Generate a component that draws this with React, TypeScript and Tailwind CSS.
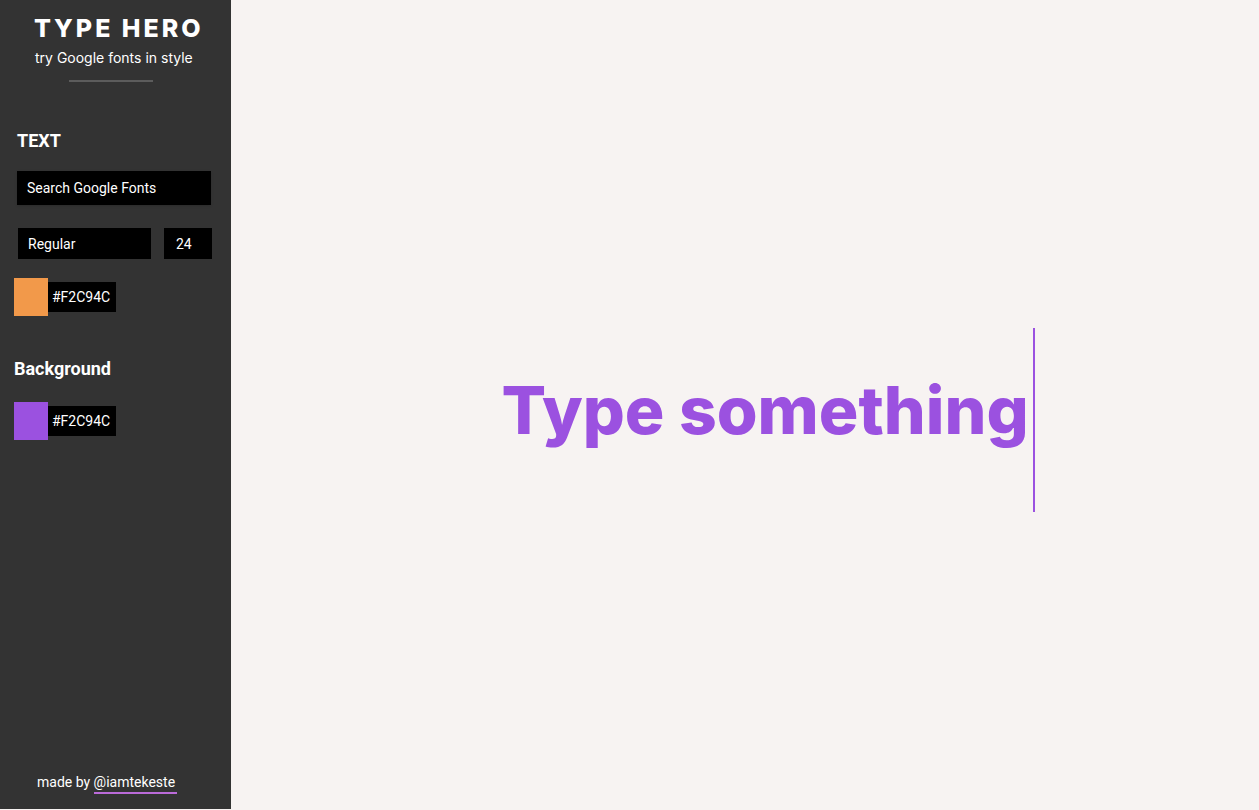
import { useState } from "react";

type ColorFieldProps = {
  label: string;
  code: string;
  initialColor: string;
};

function ColorField({ label, code, initialColor }: ColorFieldProps) {
  const [color, setColor] = useState(initialColor);
  return (
    <div className="flex items-center">
      <input
        type="color"
        aria-label={`${label} swatch`}
        value={color}
        onChange={(e) => setColor(e.target.value)}
        className="h-[38px] w-[34px] cursor-pointer appearance-none border-0 bg-transparent p-0 [&::-webkit-color-swatch-wrapper]:p-0 [&::-webkit-color-swatch]:rounded-none [&::-webkit-color-swatch]:border-0"
      />
      <input
        type="text"
        aria-label={`${label} code`}
        defaultValue={code}
        className="h-[30px] w-[68px] bg-black pl-1 text-sm text-white outline-none"
      />
    </div>
  );
}

export default function App() {
  return (
    <div className="flex min-h-screen bg-[#f7f3f2] font-['Roboto',sans-serif]">
      <aside className="mb-px flex w-[231px] shrink-0 flex-col bg-[#333333] text-white">
        <header className="px-[34px] pt-3 font-['Inter',sans-serif]">
          <h1 className="text-[25px] leading-8 font-extrabold tracking-[3px] whitespace-nowrap">TYPE HERO</h1>
          <p className="mt-1 pl-px text-sm leading-5 whitespace-nowrap">try Google fonts in style</p>
          <hr className="mt-3 ml-[35px] w-[84px] border-t-2 border-[#5c5c5c]" />
        </header>

        <section className="mt-[47px] px-[14px]">
          <h2 className="pl-[3px] text-lg leading-6 font-bold">TEXT</h2>
          <div className="mt-[18px] px-[3px]">
            <input
              type="text"
              aria-label="Search Google Fonts"
              placeholder="Search Google Fonts"
              className="h-[34px] w-[194px] bg-black px-[10px] text-sm text-white shadow-sm outline-none placeholder:text-white placeholder:opacity-100"
            />
          </div>
          <div className="mt-[23px] flex gap-[13px] pl-1">
            <select
              aria-label="Font style"
              className="h-[31px] w-[133px] appearance-none rounded-none bg-black px-[10px] text-sm text-white outline-none"
            >
              <option>Regular</option>
              <option>Bold</option>
            </select>
            <input
              type="text"
              aria-label="Font size"
              defaultValue="24"
              className="h-[31px] w-12 bg-black px-3 text-sm text-white outline-none"
            />
          </div>
          <div className="mt-[19px]">
            <ColorField label="Text color" code="#F2C94C" initialColor="#f2994a" />
          </div>
        </section>

        <section className="mt-[41px] px-[14px]">
          <h2 className="text-lg leading-6 font-bold">Background</h2>
          <div className="mt-[21px]">
            <ColorField label="Background color" code="#F2C94C" initialColor="#9b51e0" />
          </div>
        </section>

        <footer className="mt-auto pb-[15px] pl-[37px] text-sm leading-5">
          made by{" "}
          <a href="#iamtekeste" className="inline-block border-b-2 border-[#bb6bd9] pr-[2px]">
            @iamtekeste
          </a>
        </footer>
      </aside>

      <main className="flex flex-1 items-center justify-center pt-[30px] pl-[46px]">
        <input
          type="text"
          aria-label="Preview text"
          defaultValue="Type something"
          className="field-sizing-content h-[184px] max-w-full border-r-2 border-[#9b51e0] bg-transparent pr-1 pb-5 font-['Inter',sans-serif] text-[66px] font-extrabold text-[#9b51e0] outline-none"
        />
      </main>
    </div>
  );
}
